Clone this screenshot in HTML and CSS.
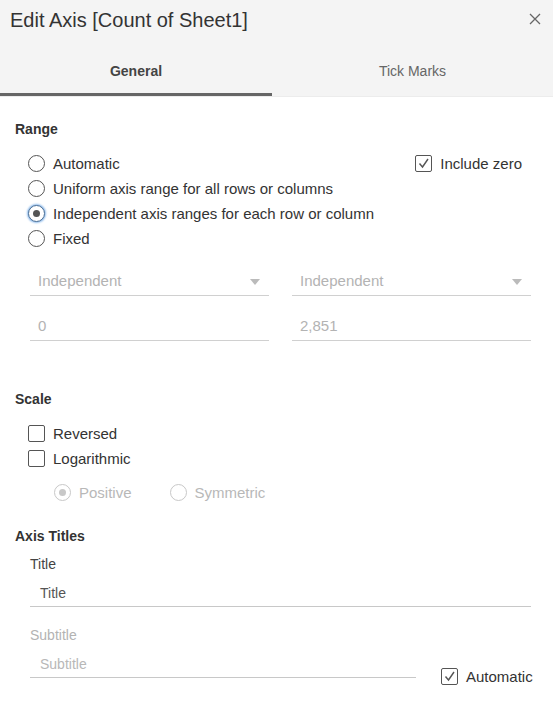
FILE: index.html
```html
<!DOCTYPE html>
<html>
<head>
<meta charset="utf-8">
<link rel="stylesheet" href="styles.css">
</head>
<body>
<div class="dialog">
  <div class="header">
    <div class="title-row">
      <div class="title">Edit Axis [Count of Sheet1]</div>
      <svg class="close" width="12" height="12" viewBox="0 0 12 12"><path d="M1 1L11 11M11 1L1 11" stroke="#666" stroke-width="1.3" fill="none"/></svg>
    </div>
    <div class="tabs">
      <div class="tab active">General</div>
      <div class="tab">Tick Marks</div>
    </div>
  </div>
  <div class="body">
    <div class="section-title">Range</div>
    <div class="range">
      <div class="options">
        <div class="opt"><span class="radio"></span><span>Automatic</span></div>
        <div class="opt"><span class="radio"></span><span>Uniform axis range for all rows or columns</span></div>
        <div class="opt"><span class="radio checked"></span><span>Independent axis ranges for each row or column</span></div>
        <div class="opt"><span class="radio"></span><span>Fixed</span></div>
      </div>
      <div class="opt include"><span class="check"><svg width="13" height="13" viewBox="0 0 13 13"><path d="M2.5 6.5L5.5 10L11 2" stroke="#555" stroke-width="1.4" fill="none"/></svg></span><span>Include zero</span></div>
    </div>
    <div class="fields">
      <div class="field"><span>Independent</span><span class="tri"></span></div>
      <div class="field"><span>Independent</span><span class="tri"></span></div>
      <div class="field"><span>0</span></div>
      <div class="field"><span>2,851</span></div>
    </div>

    <div class="section-title scale-title">Scale</div>
    <div class="options">
      <div class="opt"><span class="check"></span><span>Reversed</span></div>
      <div class="opt"><span class="check"></span><span>Logarithmic</span></div>
    </div>
    <div class="log-opts">
      <div class="opt disabled"><span class="radio checked"></span><span>Positive</span></div>
      <div class="opt disabled"><span class="radio"></span><span>Symmetric</span></div>
    </div>

    <div class="section-title axis-title">Axis Titles</div>
    <div class="sub">
      <div class="label">Title</div>
      <div class="input"><span>Title</span></div>
      <div class="label muted">Subtitle</div>
      <div class="sub-row">
        <div class="input grow muted"><span>Subtitle</span></div>
        <div class="opt auto"><span class="check"><svg width="13" height="13" viewBox="0 0 13 13"><path d="M2.5 6.5L5.5 10L11 2" stroke="#555" stroke-width="1.4" fill="none"/></svg></span><span>Automatic</span></div>
      </div>
    </div>
  </div>
</div>
</body>
</html>
```

FILE: styles.css
```css
* { box-sizing: border-box; }
html, body { margin: 0; padding: 0; background: #fff; }
body {
  font-family: "Liberation Sans", Arial, sans-serif;
  color: #333;
  font-size: 15px;
}
.dialog { width: 553px; height: 706px; overflow: hidden; }
.header {
  background: #f4f4f4;
  border-bottom: 1px solid #ececec;
}
.title-row {
  height: 40px;
  display: flex;
  align-items: flex-start;
  justify-content: space-between;
  padding: 7px 12px 0 10px;
}
.title {
  font-size: 20px;
  line-height: 26px;
  color: #333;
}
.close { margin-top: 6px; }
.tabs {
  display: flex;
  height: 56px;
}
.tab {
  width: 272px;
  text-align: center;
  font-size: 14px;
  color: #666;
  padding-top: 23px;
  border-bottom: 3px solid transparent;
}
.tab.active {
  font-weight: bold;
  color: #444;
  border-bottom-color: #666;
}
.tab + .tab { flex: 1; }
.body { padding: 23px 0 0 15px; }
.section-title {
  font-size: 14px;
  font-weight: bold;
  line-height: 18px;
  color: #333;
}
.range {
  display: flex;
  justify-content: space-between;
  padding: 13px 31px 0 13px;
}
.options { padding-left: 13px; }
.range .options { padding-left: 0; }
.opt {
  display: flex;
  align-items: center;
  height: 25px;
  gap: 8px;
  white-space: nowrap;
}
.radio {
  width: 17px;
  height: 17px;
  border: 1px solid #555;
  border-radius: 50%;
  background: #fff;
  display: inline-flex;
  align-items: center;
  justify-content: center;
  flex: none;
}
.radio.checked {
  box-shadow: 0 0 2px 1px #8ab8ea;
  border-color: #4d6f94;
}
.radio.checked::after {
  content: "";
  width: 7px;
  height: 7px;
  border-radius: 50%;
  background: #555;
}
.check {
  width: 17px;
  height: 17px;
  border: 1px solid #555;
  border-radius: 2px;
  background: #fff;
  display: inline-flex;
  align-items: center;
  justify-content: center;
  flex: none;
}
.fields {
  display: grid;
  grid-template-columns: 239px 239px;
  column-gap: 23px;
  row-gap: 14px;
  padding: 14px 0 0 15px;
}
.field {
  height: 31px;
  border-bottom: 1px solid #d0d0d0;
  display: flex;
  align-items: center;
  justify-content: space-between;
  padding: 0 9px 0 8px;
  color: #b3b3b3;
  font-size: 15px;
}
.tri {
  width: 0; height: 0;
  border-left: 5px solid transparent;
  border-right: 5px solid transparent;
  border-top: 6px solid #bbb;
  margin-top: 3px;
}
.scale-title { margin-top: 49px; }
.scale-title + .options { padding-top: 13px; }
.log-opts {
  display: flex;
  gap: 38px;
  padding: 9px 0 0 39px;
}
.opt.disabled { color: #b8b8b8; }
.opt.disabled .radio { border-color: #c8c8c8; box-shadow: none; }
.opt.disabled .radio.checked::after { background: #c8c8c8; }
.axis-title { margin-top: 22px; }
.sub { padding: 10px 22px 0 15px; }
.label { font-size: 14px; line-height: 18px; color: #444; }
.label.muted { color: #b3b3b3; margin-top: 19px; }
.input {
  height: 32px;
  border-bottom: 1px solid #c8c8c8;
  padding: 10px 0 0 10px;
  font-size: 14px;
  line-height: 16px;
  color: #555;
  margin-top: 2px;
}
.input.muted { color: #b8b8b8; }
.sub-row { display: flex; align-items: flex-end; }
.grow { flex: none; width: 386px; }
.auto { margin-left: 25px; margin-bottom: -11px; }
```
